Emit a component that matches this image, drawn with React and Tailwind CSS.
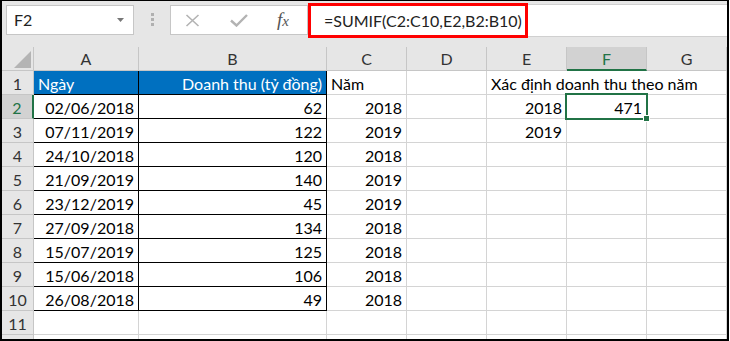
import React from "react";

const data = [
  ["02/06/2018", "62", "2018", "2018", "471"],
  ["07/11/2019", "122", "2019", "2019", ""],
  ["24/10/2018", "120", "2018", "", ""],
  ["21/09/2019", "140", "2019", "", ""],
  ["23/12/2019", "45", "2019", "", ""],
  ["27/09/2018", "134", "2018", "", ""],
  ["15/07/2019", "125", "2018", "", ""],
  ["15/06/2018", "106", "2018", "", ""],
  ["26/08/2018", "49", "2018", "", ""],
];

function RowHead({ n, selected }) {
  return selected ? (
    <div className="w-[32px] h-full shrink-0 bg-[#d2d2d2] border-r-2 border-b border-r-[#217346] border-b-[#c6c6c6] flex items-end justify-center leading-[20px] text-[#217346]">
      {n}
    </div>
  ) : (
    <div className="w-[32px] h-full shrink-0 bg-[#e6e6e6] border-r border-b border-[#c6c6c6] flex items-end justify-center leading-[20px] text-[#333]">
      {n}
    </div>
  );
}

function Cell({ w, children, right, black, noRight, className = "" }) {
  const border = black ? "border-black" : "border-[#d4d4d4]";
  return (
    <div
      className={`${w} h-full shrink-0 border-b ${noRight ? "" : "border-r"} ${border} flex items-end leading-[20px] ${right ? "justify-end pr-[4px]" : "justify-start pl-[4px]"} whitespace-nowrap ${className}`}
    >
      {children}
    </div>
  );
}

export default function App() {
  return (
    <div className="w-[730px] h-[341px] bg-white font-[Lato,sans-serif] text-[16px] text-black">
      <div className="w-[729px] h-[341px] border-l-2 border-t border-r-2 border-b-2 border-black flex flex-col bg-[#e6e6e6] overflow-hidden">
        {/* formula bar */}
        <div className="h-[46px] shrink-0 flex items-start">
          <div className="ml-[4px] mt-[4px] w-[128px] h-[30px] bg-white border border-[#c6c6c6] flex items-center pl-[7px] pr-[9px] text-[#222]">
            <span className="flex-1 leading-[20px]">F2</span>
            <svg width="7" height="4" viewBox="0 0 7 4">
              <polygon points="0,0 7,0 3.5,4" fill="#777" />
            </svg>
          </div>
          <div className="ml-[17px] mt-[12px] flex flex-col gap-[2px]">
            <div className="w-[3px] h-[3px] bg-[#b0b0b0]" />
            <div className="w-[3px] h-[3px] bg-[#b0b0b0]" />
            <div className="w-[3px] h-[3px] bg-[#b0b0b0]" />
          </div>
          <div className="ml-[16px] mt-[4px] w-[138px] h-[30px] bg-white border border-[#c6c6c6] flex items-center pl-[14px]">
            <svg width="15" height="13" viewBox="0 0 15 13">
              <path d="M1.5 1 L13.5 12 M13.5 1 L1.5 12" stroke="#b3b3b3" strokeWidth="1.6" fill="none" />
            </svg>
            <svg className="ml-[30px]" width="18" height="13" viewBox="0 0 18 13">
              <path d="M1 6.5 L6.5 11.5 L17 1" stroke="#b3b3b3" strokeWidth="2.4" fill="none" />
            </svg>
            <span className="ml-[29px] font-['Liberation_Serif',serif] italic text-[19px] text-[#555] leading-[20px]">
              f<span className="text-[15px]">x</span>
            </span>
          </div>
          <div className="mt-[2px] flex-1 h-[35px] flex">
            <div className="w-[220px] h-full bg-white border-[3px] border-[#ff0000] flex items-center pl-[13px] text-[#222] leading-[20px] whitespace-nowrap">
              =SUMIF(C2:C10,E2,B2:B10)
            </div>
            <div className="flex-1 my-[1px] bg-white border-y border-[#d0d0d0]" />
          </div>
        </div>

        {/* sheet */}
        <div className="flex-1 flex flex-col bg-white">
          {/* column header */}
          <div className="h-[24px] shrink-0 flex bg-[#e6e6e6] text-[#333]">
            <div className="w-[32px] h-full shrink-0 border-r border-b border-[#c6c6c6] flex items-end justify-end pr-[2px] pb-[2px]">
              <svg width="17" height="17" viewBox="0 0 17 17">
                <polygon points="17,0 17,17 0,17" fill="#b4b4b4" />
              </svg>
            </div>
            <div className="w-[105px] h-full shrink-0 border-r border-b border-[#c6c6c6] flex items-end justify-center leading-[20px] pb-[1px]">A</div>
            <div className="w-[188px] h-full shrink-0 border-r border-b border-[#c6c6c6] flex items-end justify-center leading-[20px] pb-[1px]">B</div>
            <div className="w-[80px] h-full shrink-0 border-r border-b border-[#c6c6c6] flex items-end justify-center leading-[20px] pb-[1px]">C</div>
            <div className="w-[80px] h-full shrink-0 border-r border-b border-[#c6c6c6] flex items-end justify-center leading-[20px] pb-[1px]">D</div>
            <div className="w-[80px] h-full shrink-0 border-r border-b border-[#c6c6c6] flex items-end justify-center leading-[20px] pb-[1px]">E</div>
            <div className="w-[80px] h-full shrink-0 bg-[#d2d2d2] border-r border-b-2 border-r-[#c6c6c6] border-b-[#217346] flex items-end justify-center leading-[20px] text-[#217346]">F</div>
            <div className="w-[80px] h-full shrink-0 border-r border-b border-[#c6c6c6] flex items-end justify-center leading-[20px] pb-[1px]">G</div>
          </div>

          {/* row 1 */}
          <div className="h-[24px] shrink-0 flex">
            <RowHead n={1} />
            <Cell w="w-[105px]" black className="bg-[#0070c0] text-white">Ngày</Cell>
            <Cell w="w-[188px]" black right className="bg-[#0070c0] text-white">Doanh thu (tỷ đồng)</Cell>
            <Cell w="w-[80px]">Năm</Cell>
            <Cell w="w-[80px]"></Cell>
            <Cell w="w-[80px]" noRight className="relative z-10 overflow-visible">Xác định doanh thu theo năm</Cell>
            <Cell w="w-[80px]" noRight></Cell>
            <Cell w="w-[80px]"></Cell>
          </div>

          {data.map((r, i) => {
            const n = i + 2;
            return (
              <div key={n} className="h-[24px] shrink-0 flex">
                <RowHead n={n} selected={n === 2} />
                <Cell w="w-[105px]" black right>{r[0]}</Cell>
                <Cell w="w-[188px]" black right>{r[1]}</Cell>
                <Cell w="w-[80px]" right>{r[2]}</Cell>
                <Cell w="w-[80px]"></Cell>
                <Cell w="w-[80px]" right>{r[3]}</Cell>
                {n === 2 ? (
                  <Cell w="w-[80px]" right className="relative">
                    {r[4]}
                    <div className="absolute -left-[2px] -top-[2px] -right-[2px] -bottom-[2px] border-2 border-[#217346] z-10" />
                    <div className="absolute -right-[4px] -bottom-[4px] w-[7px] h-[7px] bg-[#217346] border border-white z-20" />
                  </Cell>
                ) : (
                  <Cell w="w-[80px]" right>{r[4]}</Cell>
                )}
                <Cell w="w-[80px]"></Cell>
              </div>
            );
          })}

          {/* row 11 */}
          <div className="h-[24px] shrink-0 flex">
            <RowHead n={11} />
            <Cell w="w-[105px]"></Cell>
            <Cell w="w-[188px]"></Cell>
            <Cell w="w-[80px]"></Cell>
            <Cell w="w-[80px]"></Cell>
            <Cell w="w-[80px]"></Cell>
            <Cell w="w-[80px]"></Cell>
            <Cell w="w-[80px]"></Cell>
          </div>

          {/* partial row 12 */}
          <div className="flex-1 flex">
            <div className="w-[32px] h-full shrink-0 bg-[#e6e6e6] border-r border-[#c6c6c6]" />
            <div className="w-[105px] h-full shrink-0 border-r border-[#d4d4d4]" />
            <div className="w-[188px] h-full shrink-0 border-r border-[#d4d4d4]" />
            <div className="w-[80px] h-full shrink-0 border-r border-[#d4d4d4]" />
            <div className="w-[80px] h-full shrink-0 border-r border-[#d4d4d4]" />
            <div className="w-[80px] h-full shrink-0 border-r border-[#d4d4d4]" />
            <div className="w-[80px] h-full shrink-0 border-r border-[#d4d4d4]" />
            <div className="w-[80px] h-full shrink-0 border-r border-[#d4d4d4]" />
          </div>
        </div>
      </div>
    </div>
  );
}
